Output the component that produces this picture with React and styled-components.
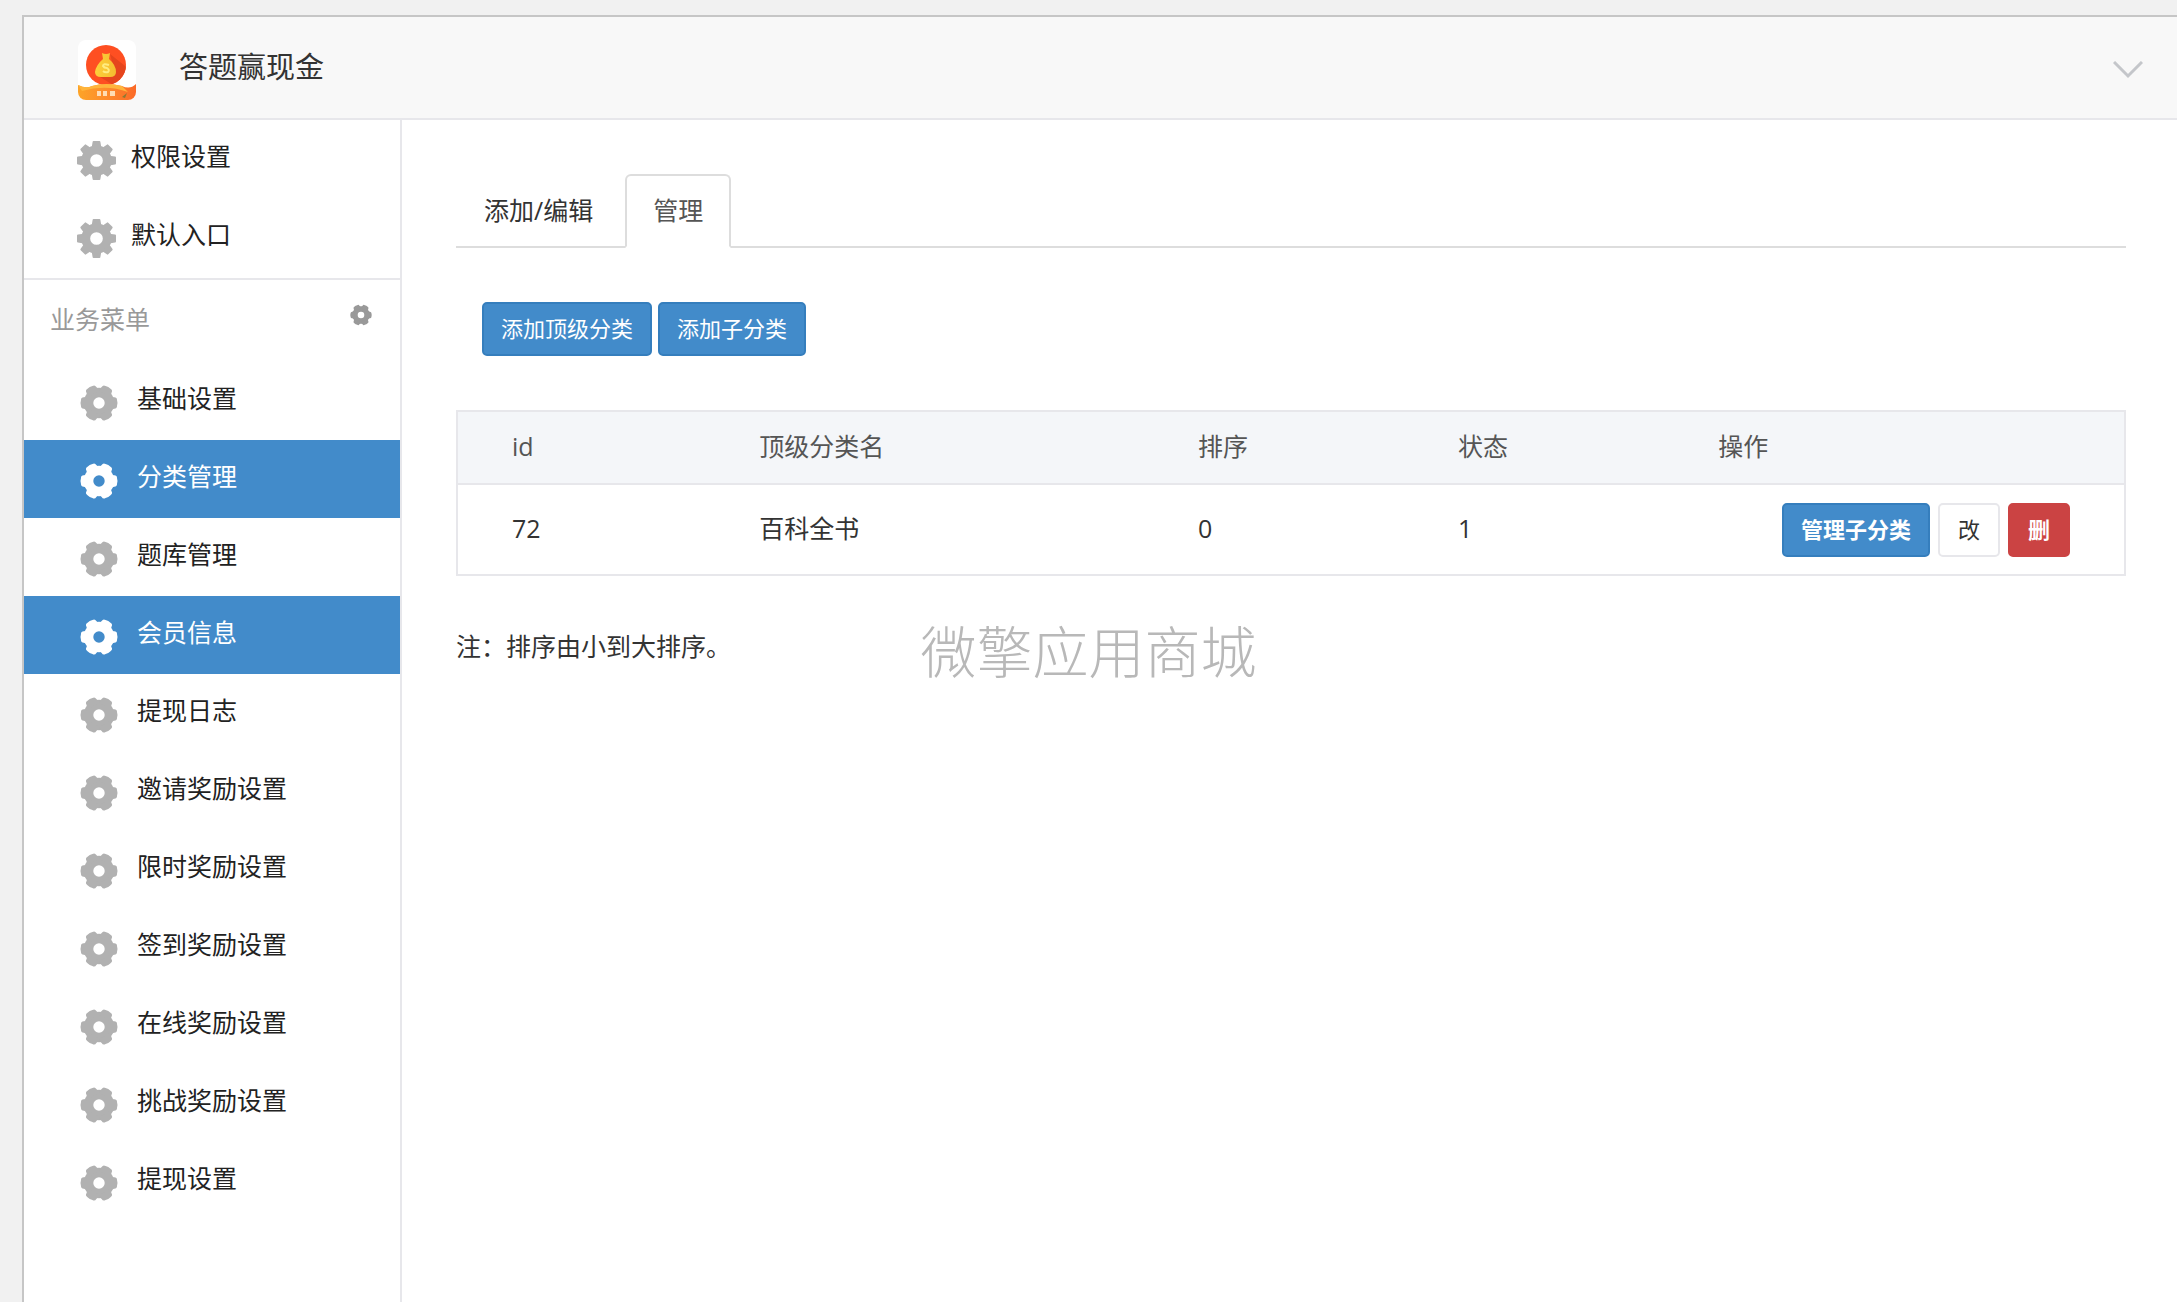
import { useState } from "react"
import styled, { createGlobalStyle } from "styled-components"

const systemMenu = ["权限设置", "默认入口"]

const businessMenu = [
    { name: "基础设置" },
    { name: "分类管理", active: true },
    { name: "题库管理" },
    { name: "会员信息", active: true },
    { name: "提现日志" },
    { name: "邀请奖励设置" },
    { name: "限时奖励设置" },
    { name: "签到奖励设置" },
    { name: "在线奖励设置" },
    { name: "挑战奖励设置" },
    { name: "提现设置" },
]

const categories = [{ id: 72, name: "百科全书", sort: 0, status: 1 }]

function CogIcon({ size }) {
    return (
        <svg width={size} height={size} viewBox="0 0 40 40" fill="currentColor" aria-hidden="true">
            <circle cx="20" cy="20" r="11" fill="none" stroke="currentColor" strokeWidth="9" />
            {[0, 45, 90, 135, 180, 225, 270, 315].map((deg) => (
                <path key={deg} d="M15 7 L16 1 Q16 0 17 0 H23 Q24 0 24 1 L25 7 Z" transform={`rotate(${deg} 20 20)`} />
            ))}
        </svg>
    )
}

function GearIcon({ size }) {
    return (
        <svg width={size} height={size} viewBox="0 0 40 40" fill="currentColor" aria-hidden="true">
            <circle cx="20" cy="20" r="11" fill="none" stroke="currentColor" strokeWidth="10" />
            {[30, 90, 150, 210, 270, 330].map((deg) => (
                <path key={deg} d="M11 9 Q14 7 14 4 Q14 1 17 1 Q20 0 23 1 Q26 1 26 4 Q26 7 29 9 Z" transform={`rotate(${deg} 20 20)`} />
            ))}
        </svg>
    )
}

function Logo() {
    return (
        <svg width="58" height="60" viewBox="0 0 58 60" role="img" aria-label="logo">
            <defs>
                <linearGradient id="ribbon" x1="0" x2="1">
                    <stop offset="0" stopColor="#fda428" />
                    <stop offset="0.5" stopColor="#fe8a2c" />
                    <stop offset="1" stopColor="#fb6a28" />
                </linearGradient>
                <linearGradient id="bag" x1="0" x2="1">
                    <stop offset="0" stopColor="#fdd03a" />
                    <stop offset="1" stopColor="#f4bd30" />
                </linearGradient>
                <clipPath id="disc"><circle cx="28" cy="25" r="20" /></clipPath>
                <clipPath id="tile"><rect width="58" height="60" rx="8" /></clipPath>
            </defs>
            <g clipPath="url(#tile)">
                <rect width="58" height="60" fill="#fff" />
                <circle cx="28" cy="25" r="20" fill="#fe4f22" />
                <path d="M32 14 L52 30 L40 48 L22 37 L37 33 Z" fill="#e5451d" clipPath="url(#disc)" />
                <path d="M24 13 Q28 15 32 13 L31 19 Q38 25 38 32 Q38 37 32 37 H23 Q17 37 17 32 Q18 25 25 19 Z" fill="url(#bag)" />
                <path d="M31 25 Q25 23 25 26 Q26 28 29 28 Q32 30 30 32 Q27 33 25 31" fill="none" stroke="#ffec80" strokeWidth="2" />
                <path d="M0 45 Q8 49 14 46 Q28 42 44 46 Q52 50 58 44 V60 H0 Z" fill="url(#ribbon)" />
                <path d="M0 45 Q8 49 14 46 Q28 42 44 46 L50 52 Q28 44 4 51 Z" fill="#ffb53c" />
                <path d="M19 51 H23 V56 H19 Z M25 51 H29 V56 H25 Z M32 51 H37 V56 H32 Z" fill="#ffdcb4" />
                <path d="M44 57 L49 53 L47 58 Z" fill="#8b7a34" />
            </g>
        </svg>
    )
}

export default function App() {
    const [tab, setTab] = useState("manage")

    return (
        <>
            <GlobalStyle />
            <Frame>
                <Header>
                    <Logo />
                    <Title>答题赢现金</Title>
                    <Toggle aria-label="展开">
                        <svg width="30" height="18" viewBox="0 0 30 18" fill="none" stroke="currentColor" strokeWidth="3">
                            <path d="M1 1 L15 15 L29 1" />
                        </svg>
                    </Toggle>
                </Header>
                <Body>
                    <Sidebar>
                        <SystemMenu>
                            {systemMenu.map((name) => (
                                <SystemLink href="#" key={name}>
                                    <CogIcon size={39} />
                                    <LinkText>{name}</LinkText>
                                </SystemLink>
                            ))}
                        </SystemMenu>
                        <MenuHead>
                            <span>业务菜单</span>
                            <MenuButton aria-label="菜单设置"><GearIcon size={22} /></MenuButton>
                        </MenuHead>
                        {businessMenu.map((item) => (
                            <MenuLink href="#" key={item.name} $active={item.active}>
                                <GearIcon size={38} />
                                <LinkText>{item.name}</LinkText>
                            </MenuLink>
                        ))}
                    </Sidebar>
                    <Content>
                        <Tabs>
                            <Tab $active={tab === "edit"} onClick={() => setTab("edit")}>添加/编辑</Tab>
                            <Tab $active={tab === "manage"} onClick={() => setTab("manage")}>管理</Tab>
                        </Tabs>
                        <Toolbar>
                            <Button $kind="primary">添加顶级分类</Button>
                            <Button $kind="primary">添加子分类</Button>
                        </Toolbar>
                        <Table>
                            <colgroup>
                                <Col $width="17.4%" />
                                <Col $width="26.3%" />
                                <Col $width="15.6%" />
                                <Col $width="15.6%" />
                                <Col />
                            </colgroup>
                            <thead>
                                <tr>
                                    <Th>id</Th>
                                    <Th>顶级分类名</Th>
                                    <Th>排序</Th>
                                    <Th>状态</Th>
                                    <Th>操作</Th>
                                </tr>
                            </thead>
                            <tbody>
                                {categories.map((row) => (
                                    <tr key={row.id}>
                                        <Td>{row.id}</Td>
                                        <Td>{row.name}</Td>
                                        <Td>{row.sort}</Td>
                                        <Td>{row.status}</Td>
                                        <Td>
                                            <Actions>
                                                <Button $kind="primary" $strong>管理子分类</Button>
                                                <Button $kind="plain">改</Button>
                                                <Button $kind="danger" $strong>删</Button>
                                            </Actions>
                                        </Td>
                                    </tr>
                                ))}
                            </tbody>
                        </Table>
                        <Note>注：排序由小到大排序。</Note>
                    </Content>
                </Body>
            </Frame>
            <Watermark>微擎应用商城</Watermark>
        </>
    )
}

const GlobalStyle = createGlobalStyle`
* {
    box-sizing: border-box;
}
body {
    margin: 0;
    background-color: #f1f1f1;
    color: #333;
    font-family: "Open Sans", "Noto Sans CJK SC", sans-serif;
    font-size: 25px;
    line-height: 36px;
}
button {
    font-family: inherit;
    cursor: pointer;
}
`

const Frame = styled.div`
display: flex;
flex-direction: column;
min-height: calc(100vh - 15px);
margin: 15px 0 0 22px;
border-top: 2px solid #c6c6c6;
border-left: 2px solid #c6c6c6;
background-color: #fff;
`

const Header = styled.header`
display: flex;
align-items: center;
height: 103px;
padding: 4px 34px 0 54px;
background-color: #f8f8f8;
border-bottom: 2px solid #e7e7eb;
`

const Title = styled.h1`
flex: 1;
margin: 0 0 6px 43px;
font-size: 29px;
font-weight: 400;
`

const Toggle = styled.button`
display: flex;
padding: 0;
border: none;
background: none;
color: #c4c6ca;
`

const Body = styled.div`
display: flex;
flex: 1;
`

const Sidebar = styled.nav`
flex: none;
width: 378px;
border-right: 2px solid #e7e7eb;
`

const SystemMenu = styled.div`
padding-bottom: 2px;
border-bottom: 2px solid #e7e7eb;
`

const SystemLink = styled.a`
display: flex;
align-items: center;
gap: 15px;
height: 78px;
padding: 3px 0 0 53px;
color: #b1b1b1;
text-decoration: none;
`

const LinkText = styled.span`
padding-bottom: 9px;
color: #222;
`

const MenuHead = styled.div`
display: flex;
justify-content: space-between;
align-items: center;
height: 82px;
padding: 0 28px 4px 26px;
color: #999;
`

const MenuButton = styled.button`
display: flex;
padding: 0 0 8px;
border: none;
background: none;
color: #999;
`

const MenuLink = styled(SystemLink)`
gap: 19px;
padding-left: 56px;
background-color: ${(p) => (p.$active ? "#428bca" : "transparent")};
color: ${(p) => (p.$active ? "#fff" : "#b1b1b1")};

${LinkText} {
    color: ${(p) => (p.$active ? "#fff" : "#222")};
}
`

const Content = styled.main`
flex: 1;
min-width: 0;
padding: 54px 51px 54px 54px;
`

const Tabs = styled.div`
display: flex;
gap: 4px;
border-bottom: 2px solid #ddd;
`

const Tab = styled.button`
height: 74px;
margin-bottom: -2px;
padding: 0 26px 4px;
border: 2px solid;
border-color: ${(p) => (p.$active ? "#ddd #ddd #fff" : "transparent transparent #ddd")};
border-radius: 6px 6px 0 0;
background-color: ${(p) => (p.$active ? "#fff" : "transparent")};
color: ${(p) => (p.$active ? "#555" : "#333")};
font-size: 25px;
`

const Toolbar = styled.div`
display: flex;
gap: 6px;
padding: 54px 26px;
`

const kinds = {
    primary: { bg: "#428bca", border: "#357ebd", color: "#fff" },
    plain: { bg: "#fff", border: "#e7e7eb", color: "#333" },
    danger: { bg: "#cb4343", border: "#cb4343", color: "#fff" },
}

const Button = styled.button`
min-width: 62px;
height: 54px;
padding: 0 17px 4px;
border: 2px solid ${(p) => kinds[p.$kind].border};
border-radius: 5px;
background-color: ${(p) => kinds[p.$kind].bg};
color: ${(p) => kinds[p.$kind].color};
font-size: 22px;
font-weight: ${(p) => (p.$strong ? 700 : 400)};
`

const Table = styled.table`
width: 100%;
table-layout: fixed;
border-collapse: collapse;
border: 2px solid #e7e7eb;
`

const Col = styled.col`
width: ${(p) => p.$width || "auto"};
`

const Th = styled.th`
height: 73px;
padding: 0 12px 4px;
background-color: #f4f6f9;
color: #555;
font-weight: 400;
text-align: left;

&:first-child {
    padding-left: 54px;
}
`

const Td = styled.td`
height: 91px;
padding: 0 12px 4px;
border-top: 2px solid #e7e7eb;

&:first-child {
    padding-left: 54px;
}
&:last-child {
    padding: 0 54px 0 12px;
}
`

const Actions = styled.div`
display: flex;
justify-content: flex-end;
gap: 8px;
`

const Note = styled.p`
margin: 52px 0 0;
`

const Watermark = styled.div`
position: fixed;
inset: 0;
display: flex;
align-items: center;
justify-content: center;
color: #b8b8b8;
font-size: 56px;
font-weight: 300;
pointer-events: none;
`
